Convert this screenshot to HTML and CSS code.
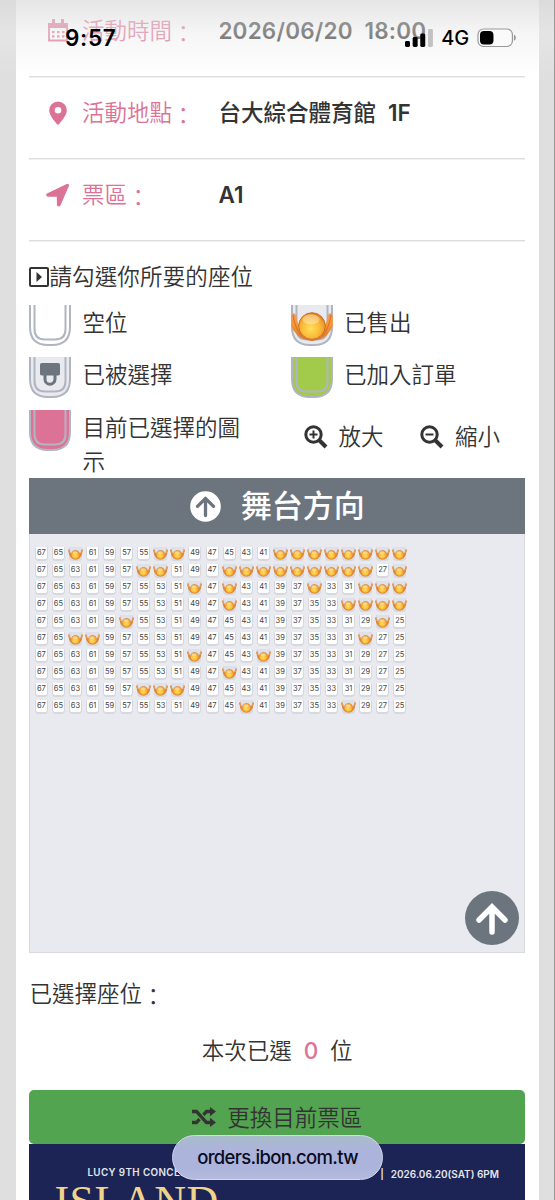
FILE: index.html
```html
<!DOCTYPE html>
<html lang="zh-Hant">
<head>
<meta charset="utf-8">
<title>座位選擇</title>
<link rel="stylesheet" href="styles.css">
</head>
<body>
<svg class="defs" width="0" height="0">
  <defs>
    <radialGradient id="ball" cx="45%" cy="60%" r="62%"><stop offset="0" stop-color="#ffdf5c"/><stop offset=".55" stop-color="#fabb38"/><stop offset=".85" stop-color="#ee9a2c"/><stop offset="1" stop-color="#c9641c"/></radialGradient>
    <linearGradient id="arm" x1="0" x2="0" y1="0" y2="1"><stop offset="0" stop-color="#ee9a68"/><stop offset=".4" stop-color="#f39a35"/><stop offset="1" stop-color="#e0702a"/></linearGradient>
    <symbol id="shell" viewBox="0 0 42 42">
      <path d="M1 0V22Q1 40 19 40H23Q41 40 41 22V0" fill="currentColor" stroke="#b1b5c1" stroke-width="2"/>
      <path d="M5.500 0V24Q5.500 34.500 16 34.500H26Q36.500 34.500 36.500 24V0" fill="none" stroke="#b1b5c1" stroke-width="2"/>
    </symbol>
    <symbol id="person" viewBox="0 0 42 42">
      <path d="M2 8C-2 12-1 21 3 26C7 32 13 35 21 36C29 35 35 32 39 26C43 21 44 12 40 8C35 9 37 15 35 18L29 27L21 32L12 27L7 18C5 15 7 9 2 8Z" fill="url(#arm)"/>
      <path d="M2 10Q4 24 11 31M40 10Q38 24 31 31" fill="none" stroke="#dc6b28" stroke-width="1"/>
      <circle cx="21" cy="21" r="13.300" fill="url(#ball)" stroke="#c7752d" stroke-width="1"/>
      <ellipse cx="20" cy="14.500" rx="8.500" ry="5" fill="#fff" opacity=".35"/>
    </symbol>
    <symbol id="person-small" viewBox="0 0 15 14">
      <path d="M.6 1.500Q1.400 6.500 5 9.500M14.400 1.500Q13.600 6.500 10 9.500" fill="none" stroke="#e39a56" stroke-width="1.800"/>
      <path d="M1.500 5Q3 10.800 7.500 10.800T13.500 5" fill="none" stroke="#e0853a" stroke-width="1.500"/>
      <circle cx="7.500" cy="6.700" r="4.300" fill="url(#ball)" stroke="#d8862f" stroke-width=".5"/>
      <ellipse cx="7.200" cy="4.700" rx="2.600" ry="1.400" fill="#fff" opacity=".4"/>
    </symbol>
  </defs>
</svg>
<main class="page">
  <section class="card">
    <div class="info info-time">
      <svg class="info-icon" viewBox="0 0 22 24"><path fill="none" stroke="currentColor" stroke-width="1.800" d="M2 5h18v16.500H2z"/><path fill="currentColor" d="M1 4h20v5H1zM5 0h3v5H5zM14 0h3v5h-3zM5 12h2.500v2.300H5zm5 0h2.500v2.300H10zm5 0h2.500v2.300H15zM5 16.300h2.500v2.300H5zm5 0h2.500v2.300H10zm5 0h2.500v2.300H15z"/></svg>
      <span class="label">活動時間<span class="colon">：</span></span><b class="value">2026/06/20&nbsp; 18:00</b>
    </div>
    <div class="info">
      <svg class="info-icon" viewBox="0 0 22 24"><path fill="currentColor" fill-rule="evenodd" d="M11 0.500a8.800 8.800 0 0 0-8.800 8.800c0 4.200 3.300 8.700 7.600 13.700q1.200 1.300 2.400 0c4.300-5 7.600-9.500 7.600-13.700A8.800 8.800 0 0 0 11 .5zm0 5.500a3.300 3.300 0 1 1 0 6.600 3.300 3.300 0 0 1 0-6.600z"/></svg>
      <span class="label">活動地點<span class="colon">：</span></span><b class="value">台大綜合體育館&nbsp; <span class="latin">1F</span></b>
    </div>
    <div class="info">
      <svg class="info-icon info-icon-wide" viewBox="0 0 24 24"><path fill="currentColor" d="M1.500 10.200 20.800 1.100q3-.7 2 2.200L14.500 22.200c-.9 1.900-3.600 1.400-3.600-.7V13.700H2.200c-2.300 0-2.700-2.600-.7-3.500z"/></svg>
      <span class="label">票區<span class="colon">：</span></span><b class="value"><span class="latin">A1</span></b>
    </div>

    <h2 class="heading">
      <svg width="20" height="20" viewBox="0 0 20 20"><rect x="1" y="1" width="18" height="18" rx="1" fill="none" stroke="currentColor" stroke-width="2"/><path d="M7.500 5v10l5.500-5z" fill="currentColor"/></svg>請勾選你所要的座位
    </h2>

    <div class="legend">
      <div class="key"><svg class="seat-key empty"><use href="#shell"/></svg><span>空位</span></div>
      <div class="key"><svg class="seat-key gray"><use href="#shell"/><use href="#person"/></svg><span>已售出</span></div>
      <div class="key"><svg class="seat-key gray" viewBox="0 0 42 42"><use href="#shell"/><rect x="11" y="6" width="20" height="12.500" rx="1.800" fill="#6c757d"/><path d="M16 18v4.200a5 5 0 0 0 10 0V18" fill="none" stroke="#6c757d" stroke-width="3"/></svg><span>已被選擇</span></div>
      <div class="key"><svg class="seat-key green"><use href="#shell"/></svg><span>已加入訂單</span></div>
      <div class="key key-long"><svg class="seat-key pink"><use href="#shell"/></svg><span>目前已選擇的圖示</span></div>
      <div class="zoom">
        <span><svg width="24" height="24" viewBox="0 0 24 24"><circle cx="9.500" cy="9.500" r="7.700" fill="none" stroke="currentColor" stroke-width="3"/><path d="M15 15l7 7" stroke="currentColor" stroke-width="4"/><path d="M5.500 9.500h8M9.500 5.500v8" stroke="currentColor" stroke-width="2"/></svg>放大</span>
        <span><svg width="24" height="24" viewBox="0 0 24 24"><circle cx="9.500" cy="9.500" r="7.700" fill="none" stroke="currentColor" stroke-width="3"/><path d="M15 15l7 7" stroke="currentColor" stroke-width="4"/><path d="M5.500 9.500h8" stroke="currentColor" stroke-width="2"/></svg>縮小</span>
      </div>
    </div>

    <div class="map">
      <div class="stage">
        <svg width="31" height="31" viewBox="0 0 31 31"><circle cx="15.500" cy="15.500" r="15.300" fill="#fff"/><path d="M15.500 24.500V8M7.500 15.300l8-8 8 8" fill="none" stroke="#6c757d" stroke-width="3.300" stroke-linecap="round" stroke-linejoin="round"/></svg>
        <span>舞台方向</span>
      </div>
      <div class="seats" id="seats"></div>
      <svg class="to-top" width="54" height="54" viewBox="0 0 54 54"><circle cx="27" cy="27" r="27" fill="#6c757d"/><path d="M27 41V16M14 29l13-13 13 13" fill="none" stroke="#fff" stroke-width="5.500" stroke-linecap="round" stroke-linejoin="miter"/></svg>
    </div>

    <p class="chosen">已選擇座位<span class="colon">：</span></p>
    <p class="count">本次已選 <b>0</b> 位</p>
    <div class="change">
      <svg width="24" height="20" viewBox="0 0 24 20"><path d="M0 4.500h4.500L14.500 15.500h4M0 15.500h4.500l3-3.300M11.500 7.800l3-3.300h4" fill="none" stroke="currentColor" stroke-width="3.300"/><path d="M18 0l6 4.500-6 4.800zM18 10.700l6 4.800-6 4.500z" fill="currentColor"/></svg>
      <span>更換目前票區</span>
    </div>
    <div class="banner">
      <div class="banner-line"><span>LUCY 9TH CONCERT</span><span class="banner-date"><i>|</i>2026.06.20(SAT) 6PM</span></div>
      <div class="banner-title">ISLAND</div>
    </div>
  </section>

  <div class="statusbar">
    <span class="clock">9:57</span>
    <svg class="signal" width="28" height="18" viewBox="0 0 28 18"><rect x="0" y="12" width="5" height="6" rx="1.500"/><rect x="7.700" y="8" width="5" height="10" rx="1.500"/><rect x="15.300" y="4.500" width="5" height="13.500" rx="1.500"/><rect x="23" y="0" width="5" height="18" rx="1.500" fill="#c2c2c2"/></svg>
    <span class="network">4G</span>
    <svg width="40" height="20" viewBox="0 0 40 20"><rect x="1" y="1" width="34.500" height="17.500" rx="5.500" fill="#fafafa" stroke="#999" stroke-width="1.200"/><rect x="3" y="3" width="13.500" height="13.500" rx="4"/><path d="M37 6.800q2 .6 2 3t-2 3z" fill="#999"/></svg>
  </div>
  <div class="address">orders.ibon.com.tw</div>
</main>
<script src="seats.js"></script>
</body>
</html>
```
FILE: styles.css
```css
* { box-sizing: border-box; }
body {
  margin: 0;
  background: #dfdfe0;
  color: #333;
  font: 350 22.5px/34px Inter, "Noto Sans CJK TC", sans-serif;
}
.defs { position: absolute; }
.page {
  position: relative;
  height: 1200px;
  padding: 0 15px 0 16px;
  overflow: hidden;
  border-right: 1px solid #99999b;
}
.card {
  height: 1200px;
  padding: 0 14px 0 13.4px;
  background: #fff;
  overflow: hidden;
}
.info {
  display: flex;
  align-items: center;
  height: 82px;
  padding: 0 0 9px 18px;
  border-bottom: 1.5px solid #dcddde;
  box-shadow: 0 1px 0 #f1f1f2;
}
.info-time { height: 77px; padding-bottom: 15px; }
.info-icon { width: 22px; height: 24px; margin-right: 12.5px; color: #dc7397; }
.info-icon-wide { width: 24px; margin: 0 11.5px 0 -1px; }
.label { width: 136.500px; color: #dc7397; white-space: nowrap; }
.colon { line-height: 1; vertical-align: -3px; }
.value { font-weight: 500; white-space: nowrap; }
.latin, .info-time .value { font-weight: 600; letter-spacing: .2px; }
.heading {
  display: flex;
  align-items: center;
  height: 34px;
  margin: 19px 0 11px;
  font: inherit;
  letter-spacing: .15px;
}
.legend {
  display: grid;
  grid-template-columns: 261.500px 1fr;
  grid-template-rows: 52px 52.500px 68.500px;
}
.key { display: flex; align-items: flex-start; }
.key span { padding: 1px 0 0 11px; }
.key-long span { width: 172px; }
.seat-key { flex: none; width: 42px; height: 42px; overflow: visible; }
.empty { color: #fff; }
.gray { color: #e9eaef; }
.green { color: #a3cb4b; }
.pink { color: #dc7397; }
.zoom { display: flex; gap: 37px; padding: 10px 0 0 13px; height: 44px; }
.zoom span { display: flex; align-items: center; gap: 10.500px; white-space: nowrap; }
.map {
  position: relative;
  height: 475px;
  background: #e9eaef;
  border: 1px solid #d9dae0;
  border-top: 0;
}
.stage {
  display: flex;
  align-items: center;
  justify-content: center;
  gap: 20px;
  height: 56px;
  margin: 0 -1px;
  background: #6c757d;
  color: #fff;
  font-size: 31px;
  font-weight: 500;
}
.seats {
  display: grid;
  grid-template-columns: repeat(22, 17.070px);
  grid-auto-rows: 17.100px;
  padding: 11px 0 0 2.500px;
}
.seat {
  display: grid;
  place-items: center;
  width: 13px;
  height: 14px;
  margin: 1.500px 2px;
  background: #fff;
  border: solid #d6d8de;
  border-width: 0 1.500px 2px;
  border-radius: 1px 1px 4px 4px;
  font: 400 7.500px/12px Inter, sans-serif;
  color: #444;
}
.seat.sold { background: #dfe1e8; border-width: 0 1px 2px; }
.seat svg { width: 15px; height: 14px; margin: 1px -2px -1px; }
.to-top { position: absolute; right: 5px; bottom: 7px; }
.chosen { margin: 24px 0 23px; }
.count { margin: 0 0 22px; text-align: center; word-spacing: 5.500px; }
.count b { color: #dc7397; font-weight: 500; }
.change {
  display: flex;
  align-items: center;
  justify-content: center;
  gap: 11px;
  height: 54px;
  background: #53a451;
  border-radius: 5px;
}
.change span { padding-top: 1px; }
.banner { height: 56px; background: #1b2454; overflow: hidden; }
.banner-line {
  display: flex;
  justify-content: space-between;
  padding: 23px 26px 0 58px;
  color: #e4e6ec;
  font: 600 9.800px/12px Inter, sans-serif;
  letter-spacing: .4px;
}
.banner-date { letter-spacing: 0; font-size: 10px; padding-top: 1px; }
.banner-date i { margin-right: 7px; font-style: normal; }
.banner-title {
  padding-left: 25px;
  color: #efd58c;
  font: 44px/50px "Liberation Serif", serif;
  letter-spacing: .5px;
  margin-top: -3px;
}
.statusbar {
  position: absolute;
  inset: 0 0 auto;
  display: flex;
  align-items: center;
  height: 76px;
  padding: 0 37px 1px 65px;
  color: #000;
  background: linear-gradient(rgba(218,218,218,.7), rgba(235,235,235,.45) 45%, rgba(255,255,255,0));
}
.clock { width: 341px; font: 600 22.500px/28px Inter, sans-serif; letter-spacing: .7px; }
.network { width: 36px; margin-left: 8px; font: 500 20px/24px Inter, sans-serif; }
.address {
  position: absolute;
  left: 172px;
  top: 1135px;
  width: 211px;
  height: 45px;
  border: 1px solid #d3d8f1;
  border-radius: 23px;
  background: linear-gradient(#a7bdc7 0, #adb4db 30%, #adb4db 75%, #b5bbdd);
  color: #080b22;
  text-align: center;
  font: 500 18.500px/43px Inter, sans-serif;
  letter-spacing: -.68px;
}
```
FILE: seats.js
```js
const sold = [
  [63, 53, 51, 39, 37, 35, 33, 31, 29, 27, 25],
  [55, 53, 45, 43, 41, 39, 37, 35, 33, 31, 29, 25],
  [49, 45, 35, 29, 27, 25],
  [45, 31, 29, 27, 25],
  [57, 27],
  [63, 61, 29],
  [49, 41],
  [45],
  [55, 53, 51],
  [43, 31]
];
let html = '';
for (const row of sold) {
  for (let n = 67; n >= 25; n -= 2) {
    html += row.includes(n)
      ? '<div class="seat sold"><svg><use href="#person-small"/></svg></div>'
      : '<div class="seat">' + n + '</div>';
  }
}
document.getElementById('seats').innerHTML = html;
```
